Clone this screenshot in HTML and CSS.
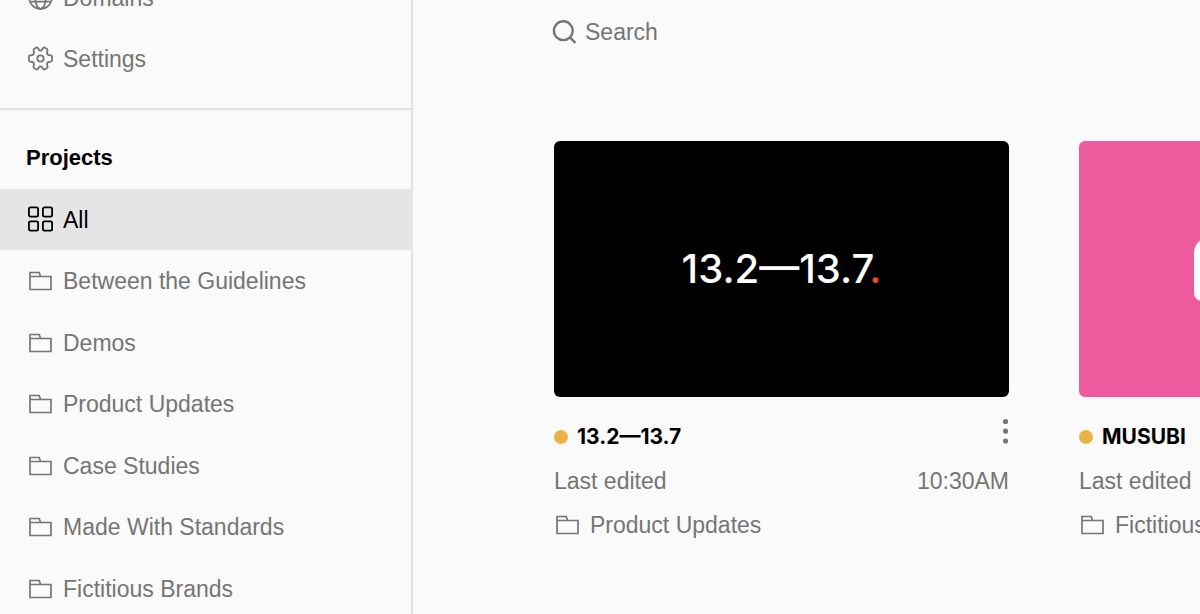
FILE: index.html
```html
<!DOCTYPE html>
<html lang="en">
<head>
<meta charset="utf-8">
<meta name="viewport" content="width=device-width, initial-scale=1">
<title>Projects</title>
<link rel="stylesheet" href="styles.css">
</head>
<body>
<svg class="sprite" aria-hidden="true">
  <symbol id="folder" viewBox="0 0 26 26">
    <path d="M3 4.500H12.200L13.600 8.500H24V21.500H3ZM3 8.500H13.600" fill="none" stroke="currentColor" stroke-width="1.700"/>
  </symbol>
</svg>
<div class="app">
  <aside class="sidebar">
    <nav class="menu menu-site" aria-label="Site">
      <a class="item" href="#domains">
        <svg class="icon" viewBox="0 0 26 26" fill="none" stroke="currentColor" stroke-width="1.700"><circle cx="13.500" cy="12.500" r="11.400"/><ellipse cx="13.500" cy="12.500" rx="5.200" ry="11.400"/><path d="M3.500 8H23.500M3.500 16.700H23.500"/></svg>
        <span>Domains</span>
      </a>
      <a class="item" href="#settings">
        <svg class="icon" viewBox="0 0 26 26" fill="none" stroke="currentColor" stroke-width="1.800" stroke-linejoin="round"><circle cx="13.500" cy="12.500" r="3.200"/><path d="M9.500 1.500Q10.500 1.300 11.200 2.400L12.100 4Q13.500 5.200 14.900 4L15.800 2.400Q16.500 1.300 17.500 1.500L19.700 2.700Q20.800 3.500 20.500 4.600L19.900 6.800Q19.900 8.600 21.700 9L23.800 9.300Q25.100 9.600 25.100 10.700V14.300Q25.100 15.400 23.800 15.700L21.700 16Q19.900 16.400 19.900 18.200L20.500 20.400Q20.800 21.500 19.700 22.300L17.500 23.500Q16.500 23.700 15.800 22.600L14.900 21Q13.500 19.800 12.100 21L11.200 22.600Q10.500 23.700 9.500 23.500L7.300 22.300Q6.200 21.500 6.500 20.400L7.100 18.200Q7.100 16.400 5.300 16L3.200 15.700Q1.900 15.400 1.900 14.300V10.700Q1.900 9.600 3.200 9.300L5.300 9Q7.100 8.600 7.100 6.800L6.500 4.600Q6.200 3.500 7.300 2.700Z"/></svg>
        <span>Settings</span>
      </a>
    </nav>
    <h2 class="heading">Projects</h2>
    <nav class="menu" aria-label="Projects">
      <a class="item item-active" href="#all" aria-current="page">
        <svg class="icon" viewBox="0 0 26 26" fill="none" stroke="currentColor" stroke-width="1.800"><rect x="1.900" y="0.400" width="9.200" height="9.200" rx="1.600"/><rect x="15.900" y="0.400" width="9.200" height="9.200" rx="1.600"/><rect x="1.900" y="14.400" width="9.200" height="9.200" rx="1.600"/><rect x="15.900" y="14.400" width="9.200" height="9.200" rx="1.600"/></svg>
        <span>All</span>
      </a>
      <a class="item" href="#guidelines"><svg class="icon"><use href="#folder"/></svg><span>Between the Guidelines</span></a>
      <a class="item" href="#demos"><svg class="icon"><use href="#folder"/></svg><span>Demos</span></a>
      <a class="item" href="#updates"><svg class="icon"><use href="#folder"/></svg><span>Product Updates</span></a>
      <a class="item" href="#cases"><svg class="icon"><use href="#folder"/></svg><span>Case Studies</span></a>
      <a class="item" href="#made"><svg class="icon"><use href="#folder"/></svg><span>Made With Standards</span></a>
      <a class="item" href="#brands"><svg class="icon"><use href="#folder"/></svg><span>Fictitious Brands</span></a>
    </nav>
  </aside>
  <main class="main">
    <label class="search">
      <svg class="icon" viewBox="0 0 26 26" fill="none" stroke="currentColor" stroke-width="2.400"><circle cx="11.300" cy="11.700" r="9.400"/><path d="M17.900 18.300L23.400 23.800"/></svg>
      <input class="search-input" type="search" placeholder="Search" aria-label="Search">
    </label>
    <div class="cards">
      <article class="card">
        <a class="thumb thumb-black" href="#project-13"><span class="wordmark">13.2—13.7<span class="accent">.</span></span></a>
        <div class="line">
          <h3 class="title"><span class="dot"></span>13.2—13.7</h3>
          <button class="more" type="button" aria-label="More options"><svg class="more-icon" viewBox="0 0 6 26" fill="currentColor"><circle cx="2.500" cy="3.500" r="2.600"/><circle cx="2.500" cy="13.200" r="2.600"/><circle cx="2.500" cy="23" r="2.600"/></svg></button>
        </div>
        <div class="line"><span>Last edited</span><time>10:30AM</time></div>
        <a class="folder" href="#updates"><svg class="icon"><use href="#folder"/></svg><span>Product Updates</span></a>
      </article>
      <article class="card">
        <a class="thumb thumb-pink" href="#musubi" aria-label="MUSUBI"><span class="shape"></span></a>
        <div class="line"><h3 class="title"><span class="dot"></span>MUSUBI</h3></div>
        <div class="line"><span>Last edited</span></div>
        <a class="folder" href="#brands"><svg class="icon"><use href="#folder"/></svg><span>Fictitious Brands</span></a>
      </article>
    </div>
  </main>
</div>
</body>
</html>
```
FILE: styles.css
```css
* {
  box-sizing: border-box;
}

body {
  margin: 0;
  overflow: hidden;
  background: #fafafa;
  color: #757575;
  font: 23px/32px "Liberation Sans", Arial, sans-serif;
}

a {
  color: inherit;
  text-decoration: none;
}

.sprite {
  display: none;
}

.app {
  display: flex;
  min-height: 100vh;
}

.sidebar {
  flex: 0 0 413px;
  border-right: 2px solid #e1e1e1;
}

.menu {
  display: grid;
  grid-auto-rows: 61px 62px;
}

.menu-site {
  margin-top: -33px;
  padding-bottom: 18px;
  border-bottom: 2px solid #e1e1e1;
}

.item {
  display: flex;
  align-items: center;
  gap: 10px;
  padding: 0 27px;
}

.item-active {
  margin-right: -2px;
  background: #e5e5e5;
  color: #000;
}

.icon {
  flex: none;
  width: 26px;
  height: 26px;
  overflow: visible;
}

.heading {
  margin: 0;
  padding: 32px 26px 15px;
  color: #000;
  font-size: 22px;
  line-height: 32px;
}

.main {
  flex: 1;
  min-width: 0;
  padding: 16px 0 0 141px;
  overflow: hidden;
}

.search {
  display: flex;
  align-items: center;
  gap: 7px;
  margin-left: -2px;
}

.search-input {
  flex: 1;
  min-width: 0;
  padding: 0;
  border: 0;
  outline: 0;
  background: none;
  color: inherit;
  font: inherit;
}

.search-input::placeholder {
  color: inherit;
  opacity: 1;
}

.cards {
  display: grid;
  grid-auto-flow: column;
  grid-auto-columns: 455px;
  gap: 70px;
  margin-top: 93px;
}

.thumb {
  display: flex;
  align-items: center;
  justify-content: center;
  aspect-ratio: 16 / 9;
  margin-bottom: 18px;
  border-radius: 6px;
}

.thumb-black {
  background: #000;
}

.thumb-pink {
  background: #ed5a9e;
}

.wordmark {
  color: #fff;
  font-family: Inter, "Liberation Sans", sans-serif;
  font-size: 40px;
  font-weight: 500;
}

.accent {
  color: #ee4427;
}

.shape {
  width: 226px;
  height: 64px;
  border-radius: 16px 16px 8px 8px;
  background: #fff;
}

.line,
.title,
.folder {
  display: flex;
  align-items: center;
}

.line {
  justify-content: space-between;
  height: 44px;
}

.title {
  gap: 9px;
  margin: 0;
  color: #000;
  font-family: Inter, "Liberation Sans", sans-serif;
  font-size: 21px;
  font-weight: 700;
}

.dot {
  width: 14px;
  height: 14px;
  border-radius: 50%;
  background: #e8b544;
}

.more {
  align-self: flex-start;
  padding: 3px 0;
  border: 0;
  background: none;
  color: inherit;
}

.more-icon {
  display: block;
  width: 6px;
  height: 26px;
}

.folder {
  gap: 10px;
  height: 44px;
}
```
